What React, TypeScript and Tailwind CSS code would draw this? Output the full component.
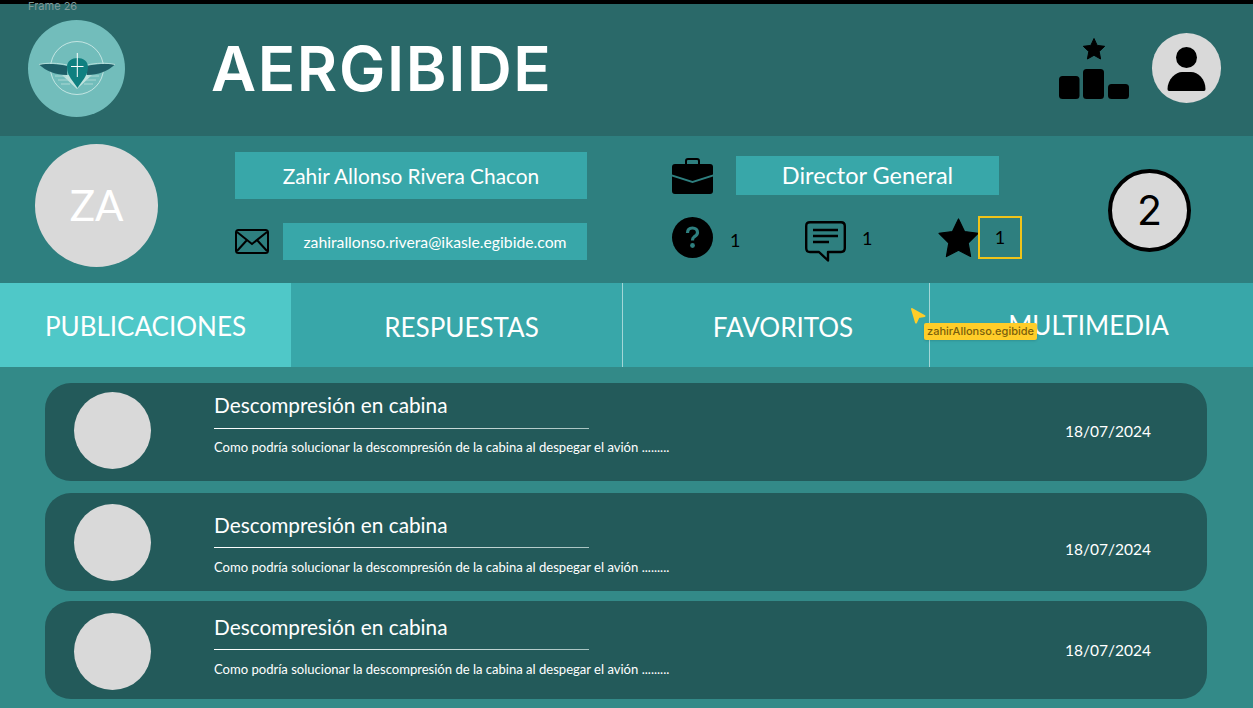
const posts = [
  { date: "18/07/2024", card: "", avatar: "mt-[9px]", text: "pt-[9px]", when: "mt-[38px]", gap: "mt-[10px]", desc: "mt-[10px]" },
  { date: "18/07/2024", card: "mt-[12px]", avatar: "mt-[11px]", text: "pt-[19px]", when: "mt-[46px]", gap: "mt-[9px]", desc: "mt-[11px]" },
  { date: "18/07/2024", card: "mt-[10px]", avatar: "mt-[12px]", text: "pt-[13px]", when: "mt-[39px]", gap: "mt-[9px]", desc: "mt-[11px]" },
];

function Logo() {
  return (
    <div className="w-[97px] h-[97px] rounded-full bg-[#72bdbb] shrink-0">
      <svg width="97" height="97" viewBox="0 0 97 97">
        <circle cx="49" cy="48" r="26.500" fill="none" stroke="#d8efec" strokeWidth="0.800" />
        <path d="M34 55H64L49 69Z" fill="#bfe2dd" />
        <path d="M27 56H38M30 60H40M33 64H42M60 56H71M58 60H68M56 64H65" stroke="#a9d8d3" strokeWidth="1.200" />
        <path d="M11 44.500C20 43.500 30 44 39 46V55C28 55 18 51 11 44.500Z" fill="#1f5f68" />
        <path d="M87 44.500C78 43.500 68 44 59 46V55C70 55 80 51 87 44.500Z" fill="#1f5f68" />
        <path d="M11 44.500C20 42.500 30 43 39 45M87 44.500C78 42.500 68 43 59 45" fill="none" stroke="#c8e6e2" strokeWidth="0.800" />
        <path d="M39 47C39 41 44 38 49.500 38C55 38 60 41 60 47C60 56 53 62 49.500 68C46 62 39 56 39 47Z" fill="#0f8080" />
        <path d="M49.300 33V57M43 46.500H55.500" stroke="#fff" strokeWidth="1" />
      </svg>
    </div>
  );
}

function Podium() {
  return (
    <svg width="72" height="62" viewBox="0 0 72 62" className="shrink-0">
      <path d="M36 0.500l3.200 6.900 7.500 0.900-5.500 5.200 1.400 7.500-6.600-3.700-6.600 3.700 1.400-7.500-5.500-5.200 7.500-0.900z" stroke="#000" strokeWidth="1" strokeLinejoin="round" />
      <rect x="1" y="38" width="20.500" height="23" rx="3.500" />
      <rect x="25" y="31" width="21" height="30" rx="3.500" />
      <rect x="50" y="46" width="21" height="15" rx="3.500" />
    </svg>
  );
}

function UserAvatar() {
  return (
    <div className="w-[69px] h-[70px] rounded-full bg-[#d9d9d9] ml-[22px] shrink-0">
      <svg width="69" height="70" viewBox="0 0 69 70">
        <circle cx="34.500" cy="24.500" r="10.500" />
        <path d="M15.500 56C15.500 46 24 39 30 39H39C46 39 53.500 46 53.500 56Q53.500 58 52 58H17Q15.500 58 15.500 56Z" />
      </svg>
    </div>
  );
}

function Envelope() {
  return (
    <svg width="34" height="25" viewBox="0 0 34 25" fill="none" stroke="#000" strokeWidth="2" className="shrink-0">
      <rect x="1" y="1" width="32" height="23" rx="2.500" />
      <path d="M2 3L17 15L32 3M2 22L12 11M32 22L22 11" />
    </svg>
  );
}

function Briefcase() {
  return (
    <svg width="41" height="36" viewBox="0 0 41 36" className="shrink-0">
      <path d="M14 6V3Q14 1 16 1H25Q27 1 27 3V6" fill="none" stroke="#000" strokeWidth="2" />
      <path d="M0 9Q0 6 3 6H38Q41 6 41 9V16.500L20.500 23L0 16.500Z" />
      <path d="M0 18.500L20.500 25L41 18.500V33Q41 36 38 36H3Q0 36 0 33Z" />
    </svg>
  );
}

function QuestionIcon() {
  return (
    <svg width="41" height="41" viewBox="0 0 41 41" className="shrink-0 mt-[1px]">
      <circle cx="20.500" cy="20.500" r="20.500" />
      <path d="M15.500 16C15.500 12.500 17.500 11 20.500 11C23.500 11 25.500 12.800 25.500 15.500C25.500 18 23.500 19 22 20C20.800 20.800 20.500 21.500 20.500 23.500" fill="none" stroke="#2e7f7f" strokeWidth="3.200" />
      <circle cx="20.500" cy="28.500" r="2.400" fill="#2e7f7f" />
    </svg>
  );
}

function CommentIcon() {
  return (
    <svg width="41" height="41" viewBox="0 0 41 41" fill="none" stroke="#000" strokeWidth="2.400" className="shrink-0 mt-[5px]">
      <path d="M5 1.200H36Q39.800 1.200 39.800 5V27Q39.800 31 36 31H23V39.500L14 31H5Q1.200 31 1.200 27V5Q1.200 1.200 5 1.200Z" strokeLinejoin="round" />
      <path d="M8 9H33M8 15H33M8 21H24" />
    </svg>
  );
}

function StarIcon() {
  return (
    <svg width="41" height="41" viewBox="0 0 41 41" className="shrink-0 ml-[-4px] mt-[2px]">
      <path d="M20.500 1L26.500 13.500L40 15.300L30.200 25L32.600 38.500L20.500 32.200L8.400 38.500L10.800 25L1 15.300L14.500 13.500Z" stroke="#000" strokeWidth="1.200" strokeLinejoin="round" />
    </svg>
  );
}

function PostCard({ post }: { post: (typeof posts)[number] }) {
  return (
    <div className={`h-[98px] rounded-[26px] bg-[#235a5a] flex items-start ${post.card}`}>
      <div className={`w-[77px] h-[77px] rounded-full bg-[#d9d9d9] ml-[29px] shrink-0 ${post.avatar}`}></div>
      <div className={`ml-[63px] w-[500px] ${post.text}`}>
        <h3 className="text-[20.800px] leading-[26px] text-white">Descompresión en cabina</h3>
        <div className={`h-px w-[375px] bg-gradient-to-r from-white to-[#a9c4c2] ${post.gap}`}></div>
        <p className={`text-[13.060px] leading-[16px] text-white ${post.desc}`}>
          Como podría solucionar la descompresión de la cabina al despegar el avión .........
        </p>
      </div>
      <span className={`ml-auto mr-[56px] text-[15.500px] leading-5 text-white ${post.when}`}>{post.date}</span>
    </div>
  );
}

export default function App() {
  return (
    <div className="relative w-[1253px] h-[708px] overflow-hidden bg-[#338a88] font-['Lato',sans-serif] text-white">
      <div className="h-1 bg-black"></div>
      <span className="absolute left-[28px] top-[-1px] text-[11px] leading-[14px] text-[#7f9a9a] font-['Inter',sans-serif]">
        Frame 26
      </span>

      <header className="h-[132px] bg-[#2a6969] flex items-start pl-[28px] pr-[32px] pt-[16px]">
        <Logo />
        <span className="ml-[86px] mt-[17px] text-[62px] leading-[64px] font-semibold tracking-[1.600px] font-['Inter',sans-serif]">
          AERGIBIDE
        </span>
        <div className="ml-auto flex items-start pt-[13px]">
          <div className="mt-[5px]"><Podium /></div>
          <UserAvatar />
        </div>
      </header>

      <section className="h-[147px] bg-[#2e7f7f] flex items-start">
        <div className="w-[123px] h-[123px] rounded-full bg-[#d9d9d9] ml-[35px] mt-[8px] flex items-center justify-center text-[42px] shrink-0">
          ZA
        </div>
        <div className="ml-[77px] w-[352px] pt-[16px] shrink-0">
          <div className="h-[47px] bg-[#38a7a9] flex items-center justify-center text-[20.850px]">
            Zahir Allonso Rivera Chacon
          </div>
          <div className="mt-[24px] flex items-center justify-between">
            <Envelope />
            <div className="w-[304px] h-[37px] bg-[#38a7a9] flex items-center justify-center text-[15.750px]">
              zahirallonso.rivera@ikasle.egibide.com
            </div>
          </div>
        </div>
        <div className="ml-[85px] w-[350px] pt-[20px] shrink-0 text-black">
          <div className="flex items-center h-[39px]">
            <Briefcase />
            <div className="ml-[23px] w-[263px] h-[39px] bg-[#38a7a9] flex items-center justify-center text-[23.500px] text-white">
              Director General
            </div>
          </div>
          <div className="mt-[21px] flex items-start h-[43px]">
            <QuestionIcon />
            <span className="ml-[17px] w-[75px] mt-[14px] text-[18px] leading-5">1</span>
            <CommentIcon />
            <span className="ml-[16px] w-[80px] mt-[12px] text-[18px] leading-5">1</span>
            <StarIcon />
            <div className="w-[44px] h-[43px] border-2 border-[#f0c419] flex items-center justify-center text-[18px] ml-[-1px]">1</div>
          </div>
        </div>
        <div className="ml-[86px] mt-[33px] w-[83px] h-[83px] rounded-full bg-[#d9d9d9] border-4 border-black flex items-center justify-center text-[41px] text-black shrink-0 font-['Inter',sans-serif]">
          2
        </div>
      </section>

      <nav className="h-[84px] bg-[#38a7a9] flex text-[26px]">
        <div className="w-[291px] bg-[#4fc8c8] flex items-center justify-center pt-[3px]">PUBLICACIONES</div>
        <div className="w-[332px] border-r border-[#a3d6d6] flex items-center justify-center pt-[4px] pl-[10px]">RESPUESTAS</div>
        <div className="w-[307px] border-r border-[#a3d6d6] flex items-center justify-center pt-[4px] pl-[14px]">FAVORITOS</div>
        <div className="flex-1 flex items-center justify-center pr-[6px]">MULTIMEDIA</div>
      </nav>

      <main className="flex flex-col pl-[45px] pr-[46px] pt-[16px] pb-[9px]">
        {posts.map((post, i) => (
          <PostCard key={i} post={post} />
        ))}
      </main>

      <svg width="17" height="18" viewBox="0 0 17 18" className="absolute left-[910px] top-[307px]">
        <path d="M2 2L14.500 9L8.500 10L6 15.500Z" fill="#ffcd29" stroke="#ffcd29" strokeWidth="2" strokeLinejoin="round" />
      </svg>
      <div className="absolute left-[924px] top-[323px] w-[113px] h-[17px] rounded-[2px] bg-[#ffcd29] shadow-sm flex items-center justify-center text-[11px] font-medium text-[#7a5f0c] font-['Inter',sans-serif]">
        zahirAllonso.egibide
      </div>
    </div>
  );
}
